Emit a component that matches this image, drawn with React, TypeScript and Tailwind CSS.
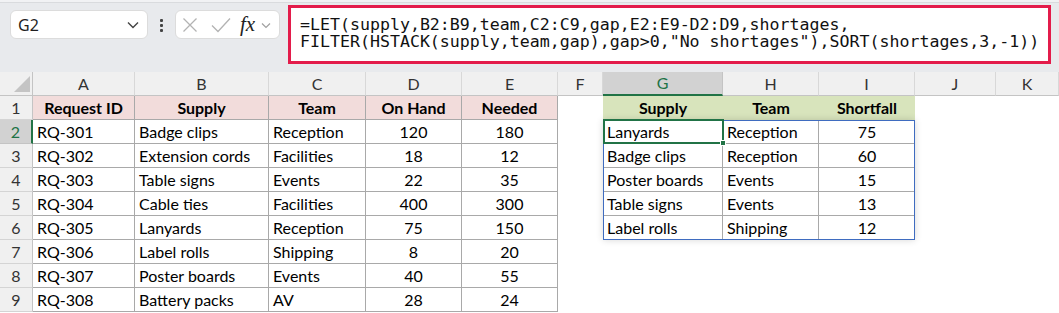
import React from 'react';

const cellFont = { fontFamily: 'Lato, "Noto Sans", sans-serif' };

const requests: [string, string, string, number, number][] = [
  ['RQ-301', 'Badge clips', 'Reception', 120, 180],
  ['RQ-302', 'Extension cords', 'Facilities', 18, 12],
  ['RQ-303', 'Table signs', 'Events', 22, 35],
  ['RQ-304', 'Cable ties', 'Facilities', 400, 300],
  ['RQ-305', 'Lanyards', 'Reception', 75, 150],
  ['RQ-306', 'Label rolls', 'Shipping', 8, 20],
  ['RQ-307', 'Poster boards', 'Events', 40, 55],
  ['RQ-308', 'Battery packs', 'AV', 28, 24],
];

const shortages: [string, string, number][] = [
  ['Lanyards', 'Reception', 75],
  ['Badge clips', 'Reception', 60],
  ['Poster boards', 'Events', 15],
  ['Table signs', 'Events', 13],
  ['Label rolls', 'Shipping', 12],
];

const columns = ['A', 'B', 'C', 'D', 'E', 'F', 'G', 'H', 'I', 'J', 'K'];

const FormulaBar: React.FC = () => (
  <div className="h-[72px] bg-[#e8eaed] relative">
    <div className="h-[3px] bg-[#f1f2f4] border-b border-[#d9dbde]" />
    <div className="flex items-start pl-[10px] pt-[2px]">
      {/* Name box */}
      <div className="mt-[5px] w-[138px] h-[29px] bg-white rounded-[6px] border border-[#dcdcdc] flex items-center justify-between pl-[7px] pr-[8px]">
        <span className="text-[16px] text-[#1f1f1f]" style={{ fontFamily: '"Noto Sans", sans-serif' }}>G2</span>
        <svg width="12" height="8" viewBox="0 0 12 8" fill="none" stroke="#444" strokeWidth="1.4">
          <path d="M1 1.5l5 5 5-5" />
        </svg>
      </div>
      {/* Dots */}
      <div className="mt-[14px] w-[27px] flex flex-col items-center gap-[2px]">
        <div className="w-[3px] h-[3px] bg-[#444] rounded-[1px]" />
        <div className="w-[3px] h-[3px] bg-[#444] rounded-[1px]" />
        <div className="w-[3px] h-[3px] bg-[#444] rounded-[1px]" />
      </div>
      {/* Cancel / enter / fx */}
      <div className="mt-[5px] w-[105px] h-[29px] bg-white rounded-[6px] border border-[#dcdcdc] flex items-center pl-[6px]">
        <svg width="16" height="16" viewBox="0 0 16 16" stroke="#b3b3b3" strokeWidth="1.3">
          <path d="M1.5 1.5l13 13M14.5 1.5l-13 13" />
        </svg>
        <svg className="ml-[13px]" width="20" height="16" viewBox="0 0 20 16" fill="none" stroke="#b3b3b3" strokeWidth="1.3">
          <path d="M1 8.5l6 6L19 1.5" />
        </svg>
        <span className="ml-[9px] text-[21px] italic text-[#222] leading-none" style={{ fontFamily: '"Liberation Serif", serif' }}>
          fx
        </span>
        <svg className="ml-[6px] mt-[2px]" width="10" height="7" viewBox="0 0 10 7" fill="none" stroke="#a0a0a0" strokeWidth="1.2">
          <path d="M1 1.5l4 4 4-4" />
        </svg>
      </div>
      {/* Formula */}
      <div
        className="ml-[8px] w-[763px] h-[59px] bg-white border-[3px] border-[#e31c4b] pl-[9px] pt-[8px] text-[16.6px] leading-[17px] text-[#111] whitespace-pre"
        style={{ fontFamily: '"DejaVu Sans Mono", monospace' }}
      >
        <div>=LET(supply,B2:B9,team,C2:C9,gap,E2:E9-D2:D9,shortages,</div>
        <div>FILTER(HSTACK(supply,team,gap),gap&gt;0,"No shortages"),SORT(shortages,3,-1))</div>
      </div>
    </div>
  </div>
);

const App: React.FC = () => {
  const rows = [];
  for (let r = 1; r <= 9; r++) {
    const selected = r === 2;
    rows.push(
      <div
        key={`rh${r}`}
        className={`flex items-center justify-center text-[16px] border-b ${
          selected
            ? 'bg-[#d2d2d2] text-[#217346] border-[#c4c4c4] border-r-2 border-r-[#217346]'
            : 'bg-[#f0f0f0] text-[#333] border-[#d4d4d4] border-r border-r-[#c4c4c4]'
        }`}
      >
        {r}
      </div>
    );
    // A-E
    for (let c = 0; c < 5; c++) {
      if (r === 1) {
        const labels = ['Request ID', 'Supply', 'Team', 'On Hand', 'Needed'];
        rows.push(
          <div
            key={`c${r}-${c}`}
            className="bg-[#f2dcdb] border-r border-b border-[#a9a9a9] flex items-center justify-center font-bold text-[16px] text-black"
          >
            {labels[c]}
          </div>
        );
      } else {
        const v = requests[r - 2][c];
        const numeric = c >= 3;
        rows.push(
          <div
            key={`c${r}-${c}`}
            className={`border-r border-b border-[#a9a9a9] flex items-center text-[16px] text-black ${
              numeric ? 'justify-center' : 'pl-[4px]'
            }`}
          >
            {v}
          </div>
        );
      }
    }
    // F
    rows.push(<div key={`f${r}`} />);
    // G-I
    if (r === 1) {
      ['Supply', 'Team', 'Shortfall'].forEach((l) =>
        rows.push(
          <div key={`g${l}`} className="bg-[#d8e4bc] flex items-center justify-center font-bold text-[16px] text-black">
            {l}
          </div>
        )
      );
    } else if (r > 6) {
      rows.push(<div key={`g${r}a`} />, <div key={`g${r}b`} />, <div key={`g${r}c`} />);
    }
    // J, K
    rows.push(<div key={`j${r}`} />, <div key={`k${r}`} />);
  }

  return (
    <div className="w-[1059px] h-[313px] bg-white overflow-hidden" style={cellFont}>
      <FormulaBar />
      <div className="grid grid-cols-[33px_102px_134px_97px_96px_96px_45px_120px_96px_96px_81px_1fr] auto-rows-[24px]">
        {/* Corner */}
        <div className="bg-[#f0f0f0] border-r border-b border-[#c4c4c4] relative">
          <div
            className="absolute right-[2px] bottom-[3px] w-[16px] h-[16px] bg-[#c4c4c4]"
            style={{ clipPath: 'polygon(100% 0, 100% 100%, 0 100%)' }}
          />
        </div>
        {columns.map((col) =>
          col === 'G' ? (
            <div
              key={col}
              className="bg-[#d2d2d2] border-r border-r-[#c4c4c4] border-b-2 border-b-[#217346] flex items-center justify-center text-[16px] text-[#217346]"
            >
              {col}
            </div>
          ) : (
            <div
              key={col}
              className="bg-[#f0f0f0] border-r border-b border-r-[#d8d8d8] border-b-[#c4c4c4] flex items-center justify-center text-[16px] text-[#333]"
            >
              {col}
            </div>
          )
        )}
        {rows}
        {/* Spilled range G2:I6 */}
        <div className="col-[8/11] row-[3/8] relative z-10 bg-white grid grid-cols-[120px_96px_96px] auto-rows-[24px] shadow-[0_0_7px_rgba(0,0,0,0.16)] outline outline-1 -outline-offset-1 outline-[#3f6cc0]">
          {shortages.map(([supply, team, gap]) => (
            <React.Fragment key={supply}>
              <div className="border-r border-b border-[#a9a9a9] flex items-center pl-[4px] text-[16px] text-black">{supply}</div>
              <div className="border-r border-b border-[#a9a9a9] flex items-center pl-[4px] text-[16px] text-black">{team}</div>
              <div className="border-b border-[#a9a9a9] flex items-center justify-center text-[16px] text-black">{gap}</div>
            </React.Fragment>
          ))}
          {/* Active cell G2 */}
          <div className="absolute left-0 top-[-1px] w-[121px] h-[25px] border-2 border-[#217346] z-10">
            <div className="absolute right-[-4px] bottom-[-4px] w-[6px] h-[6px] bg-[#217346] border border-white" />
          </div>
        </div>
      </div>
    </div>
  );
};

export default App;
